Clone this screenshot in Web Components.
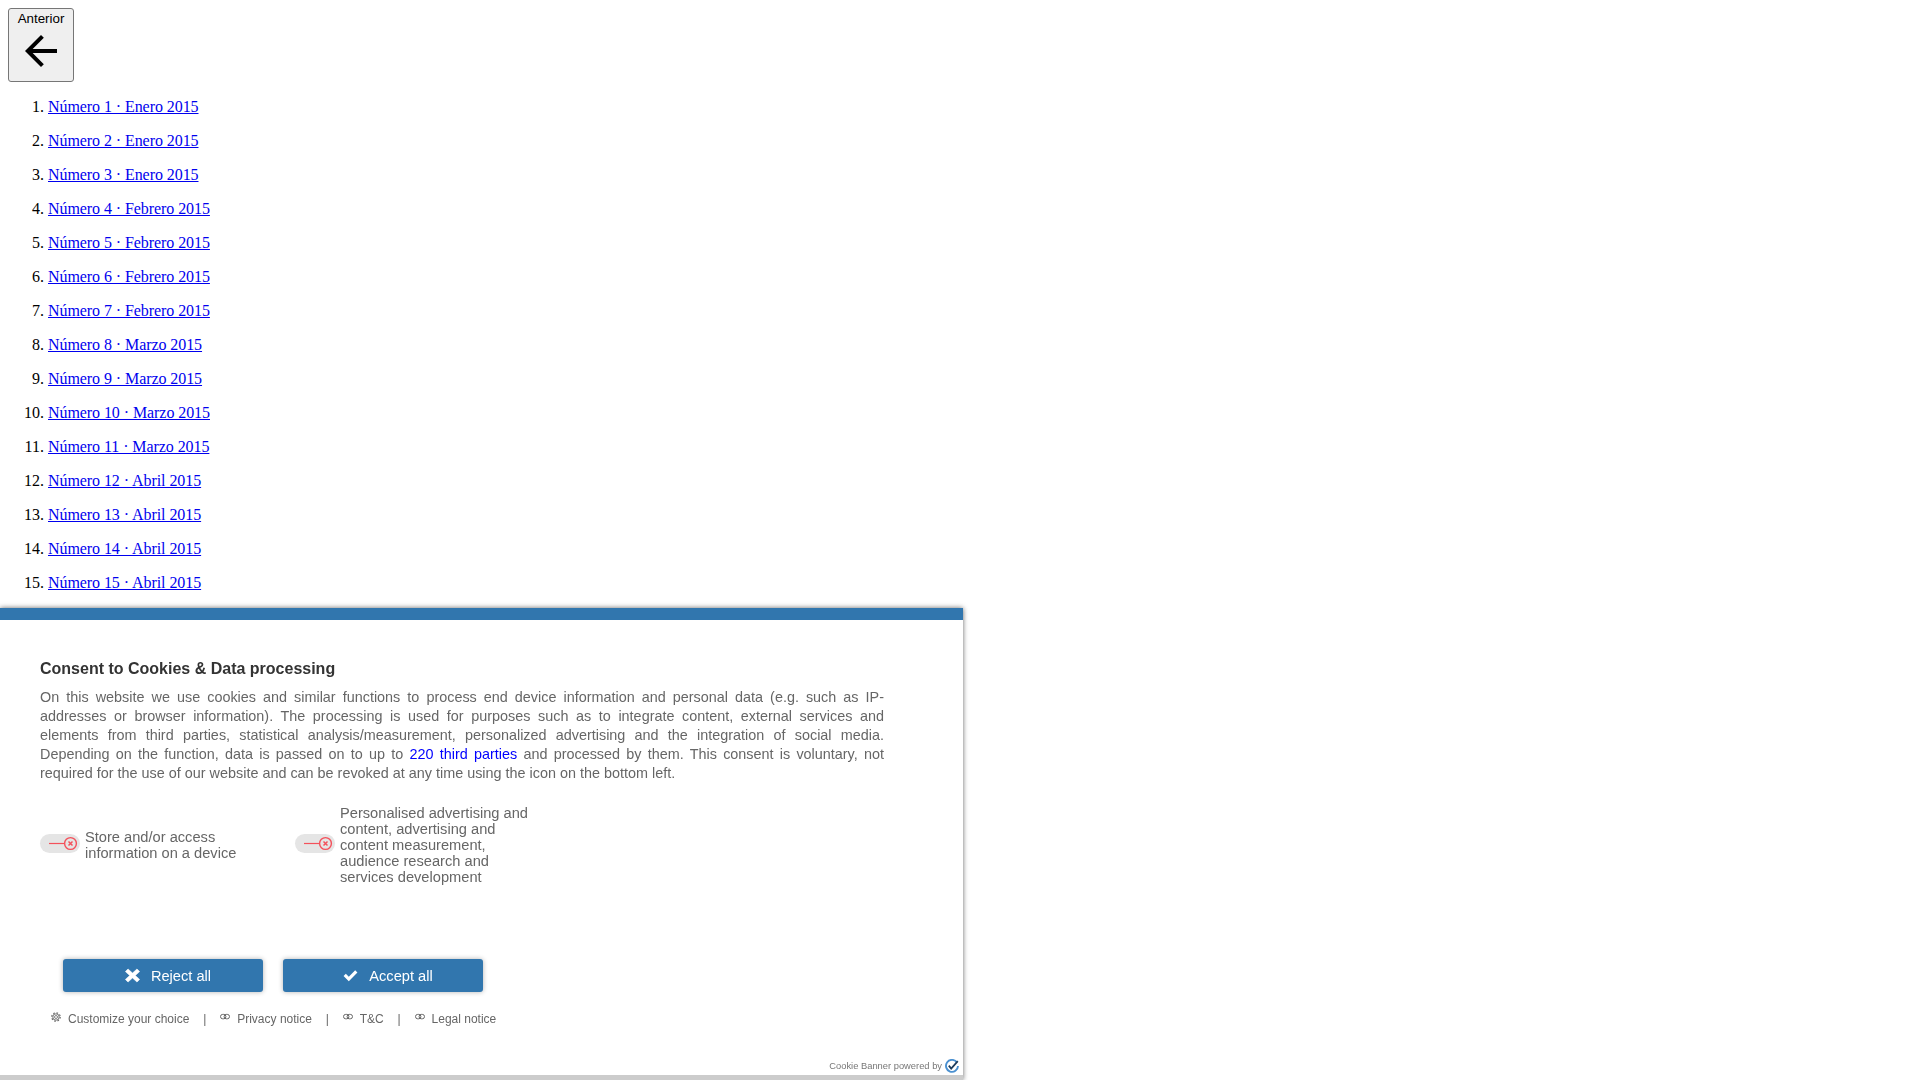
<!DOCTYPE html>
<html lang="es">
<head>
<meta charset="utf-8">
<title>Números</title>
<style>
  html, body { margin: 0; background: #fff; }
  body { padding: 8px; font: 16px/18px "Liberation Serif", serif; color: #000; box-sizing: border-box; height: 1080px; overflow: hidden; }
</style>
</head>
<body>
<prev-button label="Anterior"></prev-button>
<issue-list>
  <issue-item>Número 1 · Enero 2015</issue-item>
  <issue-item>Número 2 · Enero 2015</issue-item>
  <issue-item>Número 3 · Enero 2015</issue-item>
  <issue-item>Número 4 · Febrero 2015</issue-item>
  <issue-item>Número 5 · Febrero 2015</issue-item>
  <issue-item>Número 6 · Febrero 2015</issue-item>
  <issue-item>Número 7 · Febrero 2015</issue-item>
  <issue-item>Número 8 · Marzo 2015</issue-item>
  <issue-item>Número 9 · Marzo 2015</issue-item>
  <issue-item>Número 10 · Marzo 2015</issue-item>
  <issue-item>Número 11 · Marzo 2015</issue-item>
  <issue-item>Número 12 · Abril 2015</issue-item>
  <issue-item>Número 13 · Abril 2015</issue-item>
  <issue-item>Número 14 · Abril 2015</issue-item>
  <issue-item>Número 15 · Abril 2015</issue-item>
</issue-list>

<consent-panel>
  <span slot="title">Consent to Cookies &amp; Data processing</span>
  <span slot="body">On this website we use cookies and similar functions to process end device information and personal data (e.g. such as IP-addresses or browser information). The processing is used for purposes such as to integrate content, external services and elements from third parties, statistical analysis/measurement, personalized advertising and the integration of social media. Depending on the function, data is passed on to up to <a href="#" style="color:#00f;text-decoration:none">220 third parties</a> and processed by them. This consent is voluntary, not required for the use of our website and can be revoked at any time using the icon on the bottom left.</span>
  <consent-toggle slot="toggles">Store and/or access information on a device</consent-toggle>
  <consent-toggle slot="toggles">Personalised advertising and content, advertising and content measurement, audience research and services development</consent-toggle>
  <consent-button slot="actions" icon="x">Reject all</consent-button>
  <consent-button slot="actions" icon="check">Accept all</consent-button>
  <consent-link slot="links" icon="gear">Customize your choice</consent-link>
  <consent-link slot="links" icon="link">Privacy notice</consent-link>
  <consent-link slot="links" icon="link">T&amp;C</consent-link>
  <consent-link slot="links" icon="link">Legal notice</consent-link>
  <span slot="powered">Cookie Banner powered by</span>
</consent-panel>

<script>
function shadow(el, html) {
  [...el.childNodes].forEach(n => { if (n.nodeType === 3 && !n.textContent.trim()) n.remove(); });
  el.attachShadow({ mode: 'open' }).innerHTML = html.replace(/>\s+</g, '><');
}

customElements.define('prev-button', class extends HTMLElement {
  connectedCallback() {
    if (this.shadowRoot) return;
    shadow(this, `<style>
      :host { display: block; }
      button { display: flex; flex-direction: column; align-items: center; justify-content: flex-start; box-sizing: border-box; width: 66px; height: 74px; margin: 0; padding: 2px 0 0; border: 1px solid #767676; border-radius: 3px; background: #efefef; color: #000; font: 13.333px/15px "Liberation Sans", sans-serif; }
      svg { display: block; flex: none; width: 48px; height: 48px; margin-top: 1px; }
    </style>
    <button type="button"><span>${this.getAttribute('label')}</span><svg viewBox="0 0 24 24"><path d="M20 11H7.83l5.59-5.59L12 4l-8 8 8 8 1.41-1.41L7.83 13H20v-2z"/></svg></button>`);
  }
});

customElements.define('issue-list', class extends HTMLElement {
  connectedCallback() {
    if (this.shadowRoot) return;
    shadow(this, `<style>
      :host { display: block; margin-top: 16px; padding-left: 40px; counter-reset: issue; }
    </style><slot></slot>`);
  }
});

customElements.define('issue-item', class extends HTMLElement {
  connectedCallback() {
    if (this.shadowRoot) return;
    shadow(this, `<style>
      :host { display: block; position: relative; margin-bottom: 16px; counter-increment: issue; }
      :host::before { content: counter(issue) ". "; position: absolute; right: 100%; white-space: pre; }
      a { color: #00e; text-decoration: underline; letter-spacing: -0.07px; }
    </style><a href="#"><slot></slot></a>`);
  }
});

customElements.define('consent-panel', class extends HTMLElement {
  connectedCallback() {
    if (this.shadowRoot) return;
    shadow(this, `<style>
      :host { display: flex; flex-direction: column; box-sizing: border-box; position: fixed; left: 0; bottom: 0; width: 963px; height: 472px; background: #fff; border-top: 12px solid #3176ae; border-bottom: 5px solid #ccc; box-shadow: 0 0 5px rgba(0,0,0,.6); font-family: "Liberation Sans", sans-serif; color: #666; z-index: 10; }
      h2 { margin: 40px 79px 0 40px; font: bold 16px/18px "Liberation Sans", sans-serif; color: #333; }
      .body { margin: 10px 79px 0 40px; font-size: 14.4px; line-height: 19px; text-align: justify; }
      .toggles { display: grid; grid-template-columns: repeat(3, 255px); margin: 22px 0 0 40px; height: 80px; align-items: center; }
      .actions { display: flex; gap: 20px; margin: 74px 0 0 63px; }
      .links { display: flex; margin: 20px 0 0 51px; font-size: 12px; line-height: 14px; }
      ::slotted(consent-link:not(:last-of-type))::after { content: "|"; margin: 0 13.85px; }
      .powered { display: flex; align-items: center; justify-content: flex-end; gap: 3px; margin: 33px 4px 0 0; font-size: 9.35px; line-height: 14px; color: #777; }
      .powered svg { width: 14px; height: 14px; display: block; }
    </style>
    <h2><slot name="title"></slot></h2>
    <div class="body"><slot name="body"></slot></div>
    <div class="toggles"><slot name="toggles"></slot></div>
    <div class="actions"><slot name="actions"></slot></div>
    <div class="links"><slot name="links"></slot></div>
    <div class="powered"><slot name="powered"></slot>
      <svg viewBox="0 0 14 14"><path d="M11.9 3.4A6 6 0 1 0 13 7" fill="none" stroke="#4a90d0" stroke-width="1.9"/><path d="M3.8 6.6 6.2 9.6 12.8 2.2" fill="none" stroke="#1d3c5c" stroke-width="1.8"/></svg>
    </div>`);
  }
});

customElements.define('consent-toggle', class extends HTMLElement {
  connectedCallback() {
    if (this.shadowRoot) return;
    shadow(this, `<style>
      :host { display: flex; align-items: center; gap: 5px; width: 240px; font-size: 14.65px; line-height: 16px; color: #666; }
      .pill { flex: none; width: 40px; height: 19px; margin-bottom: 3px; border-radius: 10px; background: #e5e5e5; }
      svg { display: block; width: 40px; height: 19px; }
    </style>
    <div class="pill"><svg viewBox="0 0 40 19"><path d="M9 9.5H24.5" stroke="#f4515b" stroke-width="1.2"/><circle cx="30.5" cy="9.5" r="5.9" fill="none" stroke="#f4515b" stroke-width="1.4"/><path d="M28.5 7.5l4 4M32.5 7.5l-4 4" stroke="#f4515b" stroke-width="1.5"/></svg></div>
    <div><slot></slot></div>`);
  }
});

customElements.define('consent-button', class extends HTMLElement {
  connectedCallback() {
    if (this.shadowRoot) return;
    const x = `<path d="M3.2 1 8 5.4 12.8 1 15.6 3.8 11 8 15.6 12.2 12.8 15 8 10.6 3.2 15 .4 12.2 5 8 .4 3.8Z" fill="#fff" stroke="#fff" stroke-width=".6" stroke-linejoin="round"/>`;
    const check = `<path d="M.6 8.4 3 6l3.2 3.2L13 2.4 15.4 4.8 6.2 14Z" fill="#fff"/>`;
    shadow(this, `<style>
      :host { display: flex; align-items: center; justify-content: center; gap: 11px; box-sizing: border-box; width: 200px; height: 33px; padding-left: 10px; border-radius: 3px; background: #3176ae; box-shadow: 0 0 5px rgba(0,0,0,.3); color: #fff; font-size: 14.65px; }
      svg { width: 15px; height: 15px; display: block; flex: none; }
    </style><svg viewBox="0 0 16 16">${this.getAttribute('icon') === 'x' ? x : check}</svg><span><slot></slot></span>`);
  }
});

customElements.define('consent-link', class extends HTMLElement {
  connectedCallback() {
    if (this.shadowRoot) return;
    const gear = `<circle cx="5" cy="5" r="1.5" fill="none" stroke="#666" stroke-width=".8"/><circle cx="5" cy="5" r="3.2" fill="none" stroke="#666" stroke-width=".9"/><circle cx="5" cy="5" r="4.2" fill="none" stroke="#666" stroke-width="1.2" stroke-dasharray="1.6 1.7"/>`;
    const link = `<rect x=".5" y="2.4" width="5.4" height="4.4" rx="2.2" fill="none" stroke="#666" stroke-width="1"/><rect x="4.1" y="2.4" width="5.4" height="4.4" rx="2.2" fill="none" stroke="#666" stroke-width="1"/>`;
    shadow(this, `<style>
      :host { display: flex; align-items: center; }
      svg { width: 10px; height: 10px; display: block; margin: -4px 7px 0 0; }
    </style><svg viewBox="0 0 10 10">${this.getAttribute('icon') === 'gear' ? gear : link}</svg><span><slot></slot></span>`);
  }
});
</script>
</body>
</html>
